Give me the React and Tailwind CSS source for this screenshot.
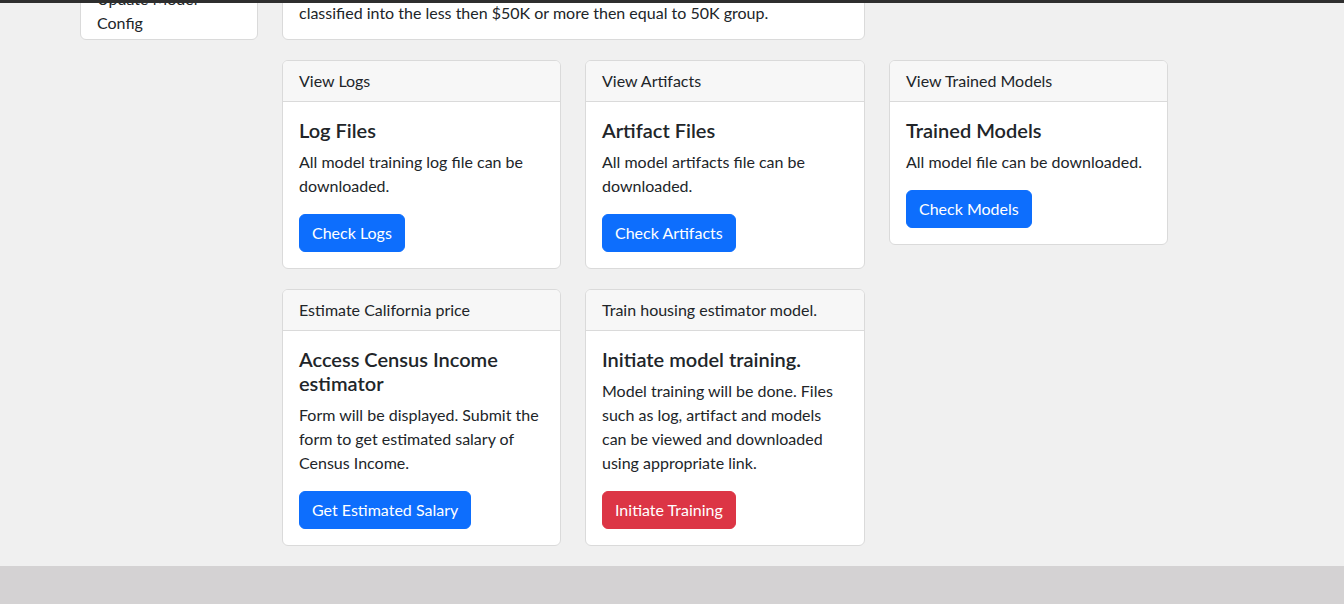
import React from 'react';

const cards = [
  { head: 'View Logs', title: 'Log Files', text: 'All model training log file can be downloaded.', btn: 'Check Logs', red: false },
  { head: 'View Artifacts', title: 'Artifact Files', text: 'All model artifacts file can be downloaded.', btn: 'Check Artifacts', red: false },
  { head: 'View Trained Models', title: 'Trained Models', text: 'All model file can be downloaded.', btn: 'Check Models', red: false },
  { head: 'Estimate California price', title: 'Access Census Income estimator', text: 'Form will be displayed. Submit the form to get estimated salary of Census Income.', btn: 'Get Estimated Salary', red: false },
  { head: 'Train housing estimator model.', title: 'Initiate model training.', text: 'Model training will be done. Files such as log, artifact and models can be viewed and downloaded using appropriate link.', btn: 'Initiate Training', red: true },
];

const Card = ({ c }) => (
  <div className="bg-white border border-[#dadada] rounded-md overflow-hidden">
    <div className="bg-[#f7f7f7] border-b border-[#dadada] px-4 py-2 leading-6">{c.head}</div>
    <div className="p-4">
      <h5 className="text-xl leading-6 font-semibold mb-2">{c.title}</h5>
      <p className="leading-6 mb-4">{c.text}</p>
      <button className={`${c.red ? 'bg-[#dc3545] border-[#dc3545]' : 'bg-[#0d6efd] border-[#0d6efd]'} border text-white px-3 py-1.5 leading-6 rounded-md`}>{c.btn}</button>
    </div>
  </div>
);

export default function App() {
  return (
    <div className="h-screen flex flex-col bg-[#f0f0f0] text-[#212529] text-base font-['Lato','Open_Sans',sans-serif]">
      <div className="h-[3px] bg-[#2e2e2e] shrink-0" />
      <div className="flex-1 overflow-hidden">
        <div className="flex gap-[25px] pl-[80px]">
          <div className="w-[178px] shrink-0">
            <div className="-mt-[20px] bg-white border border-[#dadada] rounded-md px-4 pt-[3px] pb-[4px] leading-6">
              <div>Update Model</div>
              <div>Config</div>
            </div>
          </div>
          <div className="w-[885px] -ml-px">
            <div className="w-[583px] -mt-[23px] bg-white border border-[#dadada] rounded-md px-4 pt-[20px] pb-[14px] leading-6">
              classified into the less then $50K or more then equal to 50K group.
            </div>
            <div className="grid grid-cols-[279px_280px_279px] gap-x-[24px] gap-y-[20px] mt-[20px] items-start">
              {cards.map((c) => <Card key={c.head} c={c} />)}
            </div>
          </div>
        </div>
      </div>
      <div className="h-[38px] bg-[#d4d2d3] shrink-0" />
    </div>
  );
}
